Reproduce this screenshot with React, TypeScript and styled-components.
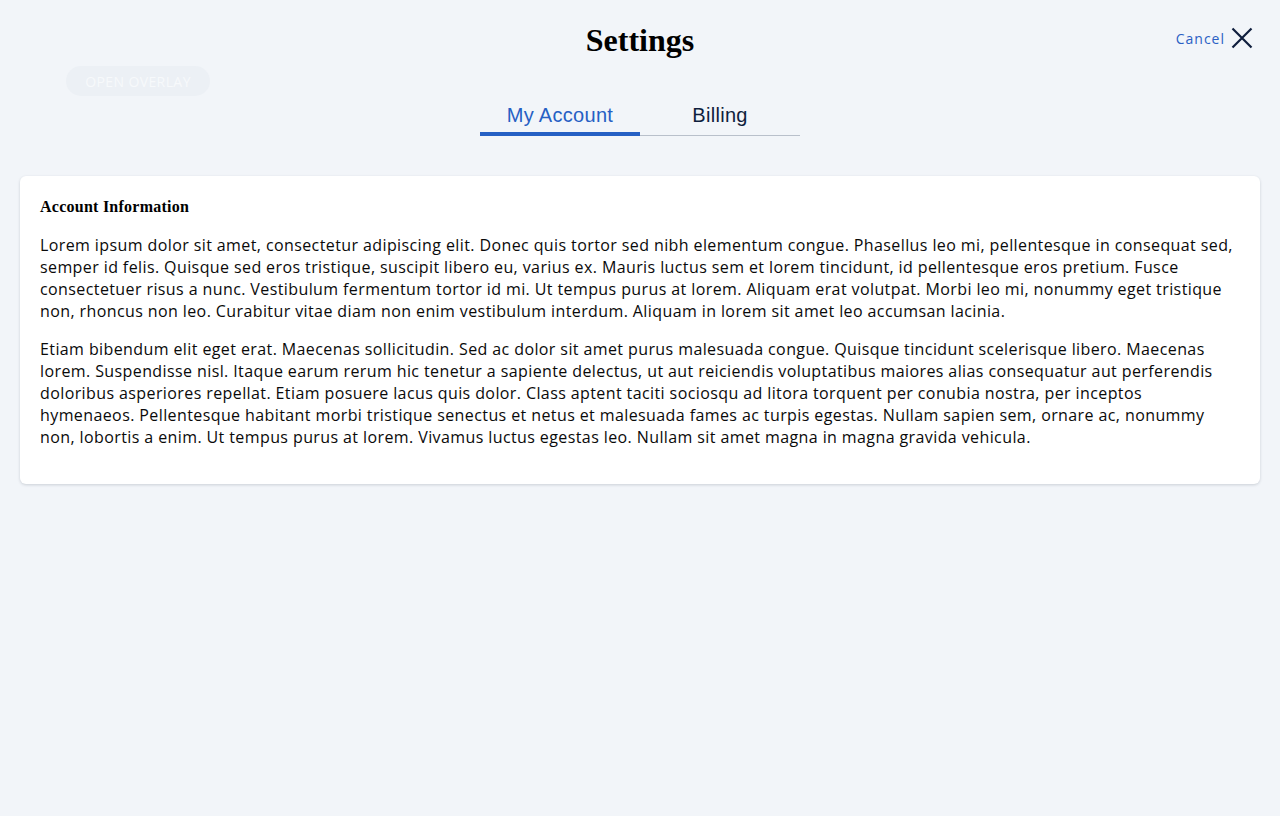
import React, { useState } from "react";
import styled, { createGlobalStyle } from "styled-components";

const GlobalStyle = createGlobalStyle`
  html, body { margin: 0; padding: 0; background: #f2f5f9; }
  body { font-family: "Open Sans", "Liberation Sans", sans-serif; color: #111; }
  * { box-sizing: border-box; }
`;

const Page = styled.div`
  position: relative;
  min-height: 816px;
  padding: 0 20px 20px;
`;

const Header = styled.header`
  display: grid;
  grid-template-columns: 1fr auto 1fr;
  align-items: center;
  height: 80px;
`;

const Title = styled.h1`
  grid-column: 2;
  margin: 0;
  font-family: "Liberation Serif", "Times New Roman", serif;
  font-weight: 700;
  font-size: 32px;
  line-height: 80px;
  color: #000;
`;

const CancelButton = styled.button`
  grid-column: 3;
  justify-self: end;
  display: flex;
  align-items: center;
  gap: 6px;
  margin: 0 7px 4px 0;
  padding: 0;
  border: none;
  background: none;
  cursor: pointer;
  font-family: "Open Sans", sans-serif;
  font-size: 14px;
  letter-spacing: 1px;
  color: #2a60c4;
  height: 24px;
`;

const OverlayButton = styled.button`
  position: absolute;
  left: 66px;
  top: 66px;
  width: 144px;
  height: 30px;
  border: none;
  border-radius: 15px;
  background: #ecf0f5;
  color: #f7f9fb;
  font-family: "Open Sans", sans-serif;
  font-size: 14px;
  letter-spacing: 0.4px;
  text-transform: uppercase;
  cursor: pointer;
`;

const Tabs = styled.nav`
  display: flex;
  justify-content: center;
`;

const TabList = styled.div`
  display: flex;
  width: 320px;
  border-bottom: 1px solid #b9c0cb;
`;

const Tab = styled.button<{ $active: boolean }>`
  flex: 1;
  height: 56px;
  padding: 0 0 5px;
  margin-bottom: -1px;
  border: none;
  border-bottom: 4px solid ${(p) => (p.$active ? "#2660c4" : "transparent")};
  background: none;
  cursor: pointer;
  font-family: "Liberation Sans", Arial, sans-serif;
  font-size: 20px;
  letter-spacing: 0.3px;
  display: flex;
  align-items: flex-end;
  justify-content: center;
  color: ${(p) => (p.$active ? "#2660c4" : "#0f1e3d")};
`;

const Card = styled.section`
  margin-top: 40px;
  background: #fff;
  border-radius: 6px;
  box-shadow: 0 1px 3px rgba(30, 40, 60, 0.18);
  padding: 20px 20px 20px;
`;

const CardTitle = styled.h3`
  margin: 0 0 16px;
  font-family: "Liberation Serif", "Times New Roman", serif;
  font-weight: 700;
  font-size: 16px;
  line-height: 22px;
  letter-spacing: 0.25px;
  color: #000;
`;

const Paragraph = styled.p`
  margin: 0 6px 16px 0;
  font-size: 16px;
  line-height: 22px;
  letter-spacing: 0.4px;
  color: #0a0a0a;
`;

const CloseIcon = () => (
  <svg width="22" height="22" viewBox="0 0 22 22" fill="none">
    <path d="M1.5 1.5 L20.5 20.5 M20.5 1.5 L1.5 20.5" stroke="#0f1e3d" strokeWidth="2.2" />
  </svg>
);

export default function App() {
  const [tab, setTab] = useState("account");
  return (
    <>
      <GlobalStyle />
      <Page>
        <Header>
          <Title>Settings</Title>
          <CancelButton>
            Cancel
            <CloseIcon />
          </CancelButton>
        </Header>
        <OverlayButton>Open Overlay</OverlayButton>
        <Tabs>
          <TabList>
            <Tab $active={tab === "account"} onClick={() => setTab("account")}>
              My Account
            </Tab>
            <Tab $active={tab === "billing"} onClick={() => setTab("billing")}>
              Billing
            </Tab>
          </TabList>
        </Tabs>
        <Card>
          <CardTitle>Account Information</CardTitle>
          <Paragraph>
            Lorem ipsum dolor sit amet, consectetur adipiscing elit. Donec quis tortor sed nibh elementum congue. Phasellus leo mi, pellentesque in consequat sed, semper id felis. Quisque sed eros tristique, suscipit libero eu, varius ex. Mauris luctus sem et lorem tincidunt, id pellentesque eros pretium. Fusce consectetuer risus a nunc. Vestibulum fermentum tortor id mi. Ut tempus purus at lorem. Aliquam erat volutpat. Morbi leo mi, nonummy eget tristique non, rhoncus non leo. Curabitur vitae diam non enim vestibulum interdum. Aliquam in lorem sit amet leo accumsan lacinia.
          </Paragraph>
          <Paragraph>
            Etiam bibendum elit eget erat. Maecenas sollicitudin. Sed ac dolor sit amet purus malesuada congue. Quisque tincidunt scelerisque libero. Maecenas lorem. Suspendisse nisl. Itaque earum rerum hic tenetur a sapiente delectus, ut aut reiciendis voluptatibus maiores alias consequatur aut perferendis doloribus asperiores repellat. Etiam posuere lacus quis dolor. Class aptent taciti sociosqu ad litora torquent per conubia nostra, per inceptos hymenaeos. Pellentesque habitant morbi tristique senectus et netus et malesuada fames ac turpis egestas. Nullam sapien sem, ornare ac, nonummy non, lobortis a enim. Ut tempus purus at lorem. Vivamus luctus egestas leo. Nullam sit amet magna in magna gravida vehicula.
          </Paragraph>
        </Card>
      </Page>
    </>
  );
}
